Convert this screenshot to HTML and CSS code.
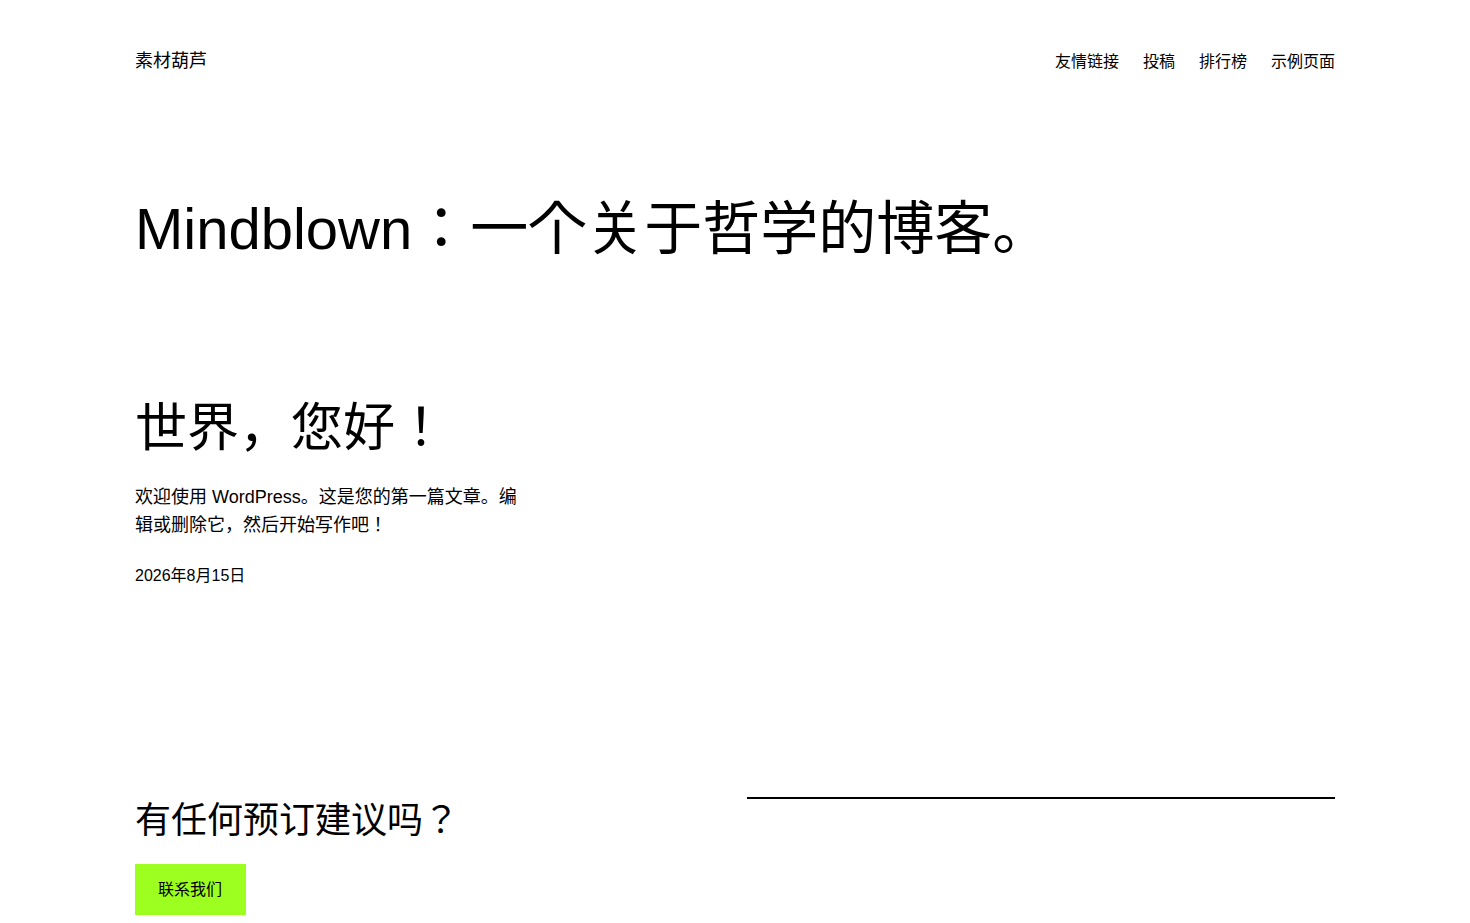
FILE: index.html
```html
<!DOCTYPE html>
<html>
<head>
<meta charset="utf-8">
<title>素材葫芦</title>
<link rel="stylesheet" href="styles.css">
</head>
<body>
<div class="page">
  <header class="site-header">
    <a class="site-title" href="#">素材葫芦</a>
    <nav class="site-nav">
      <a href="#">友情链接</a>
      <a href="#">投稿</a>
      <a href="#">排行榜</a>
      <a href="#">示例页面</a>
    </nav>
  </header>

  <main>
    <h1 class="blog-heading">Mindblown：一个关于哲学的博客。</h1>

    <div class="post-grid">
      <article class="post">
        <h2 class="post-title"><a href="#">世界，您好！</a></h2>
        <p class="post-excerpt">欢迎使用 WordPress。这是您的第一篇文章。编辑或删除它，然后开始写作吧！</p>
        <div class="post-date">2026年8月15日</div>
      </article>
    </div>
  </main>

  <footer class="site-footer">
    <div class="footer-left">
      <h2 class="footer-heading">有任何预订建议吗？</h2>
      <a class="button" href="#">联系我们</a>
    </div>
    <div class="footer-right">
      <hr class="separator">
    </div>
  </footer>
</div>
</body>
</html>
```
FILE: styles.css
```css
html, body {
  margin: 0;
  padding: 0;
  background: #ffffff;
  color: #000000;
  font-family: "Liberation Sans", "Noto Sans CJK JP", sans-serif;
}

a {
  color: inherit;
  text-decoration: none;
}

.page {
  padding: 0 135px;
}

.site-header {
  display: flex;
  justify-content: space-between;
  align-items: center;
  padding-top: 46px;
  height: 29px;
}

.site-title {
  font-size: 18px;
  line-height: 28px;
}

.site-nav {
  display: flex;
  gap: 24px;
  font-size: 16px;
  line-height: 26px;
  padding-top: 2px;
}

.blog-heading {
  margin: 119px 0 0;
  font-size: 58px;
  font-weight: 400;
  line-height: 70px;
}

.post-grid {
  display: grid;
  grid-template-columns: repeat(3, 1fr);
  gap: 15px;
  margin-top: 133px;
}

.post-title {
  margin: 0;
  font-size: 52px;
  font-weight: 400;
  line-height: 62px;
}

.post-excerpt {
  margin: 24px 0 0;
  font-size: 18px;
  line-height: 28px;
}

.post-date {
  margin-top: 24px;
  font-size: 16px;
  line-height: 26px;
}

.site-footer {
  display: flex;
  margin-top: 208px;
}

.footer-left {
  flex: 0 0 612px;
}

.footer-right {
  flex: 1;
}

.footer-heading {
  margin: 2px 0 0;
  font-size: 36px;
  font-weight: 400;
  line-height: 44px;
}

.button {
  display: inline-block;
  margin-top: 21px;
  background: #9dff20;
  font-size: 16px;
  line-height: 25px;
  padding: 13px 24px 13px 23px;
}

.separator {
  margin: 0;
  border: none;
  border-top: 2px solid #000000;
}
```
